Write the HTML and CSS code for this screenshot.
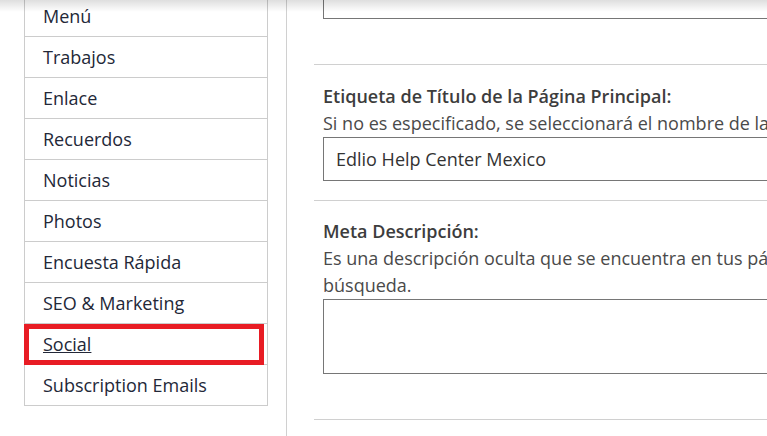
FILE: index.html
```html
<!DOCTYPE html>
<html lang="es">
<head>
<meta charset="utf-8">
<link rel="stylesheet" href="styles.css">
</head>
<body>
<div class="top-shadow"></div>
<div class="page">
  <aside class="sidebar">
    <ul class="nav">
      <li class="nav-item">Menú</li>
      <li class="nav-item">Trabajos</li>
      <li class="nav-item">Enlace</li>
      <li class="nav-item">Recuerdos</li>
      <li class="nav-item">Noticias</li>
      <li class="nav-item">Photos</li>
      <li class="nav-item">Encuesta Rápida</li>
      <li class="nav-item">SEO &amp; Marketing</li>
      <li class="nav-item nav-active"><span class="nav-link">Social</span><span class="highlight"></span></li>
      <li class="nav-item">Subscription Emails</li>
    </ul>
  </aside>
  <main class="content">
    <section class="field field-first">
      <div class="input input-top"></div>
    </section>
    <section class="field">
      <div class="label">Etiqueta de Título de la Página Principal:</div>
      <div class="help">Si no es especificado, se seleccionará el nombre de la escuela por defecto.</div>
      <div class="input">Edlio Help Center Mexico</div>
    </section>
    <section class="field field-last">
      <div class="label">Meta Descripción:</div>
      <div class="help">Es una descripción oculta que se encuentra en tus páginas y que es utilizada por los<br>búsqueda.</div>
      <div class="textarea"></div>
    </section>
  </main>
</div>
</body>
</html>
```
FILE: styles.css
```css
html, body {
  margin: 0;
  padding: 0;
  background: #fff;
  overflow: hidden;
  height: 436px;
}
body {
  font-family: "Open Sans", "Noto Sans", sans-serif;
  font-size: 18px;
  color: #333;
  position: relative;
}
.top-shadow {
  position: absolute;
  left: 0;
  right: 0;
  top: 0;
  height: 12px;
  background: linear-gradient(to bottom, rgba(0,0,0,0.13), rgba(0,0,0,0));
  z-index: 5;
}
.page {
  display: flex;
  margin-top: -4px;
  min-height: 460px;
}
.sidebar {
  width: 262px;
  padding-left: 24px;
  border-right: 1px solid #d0d0d0;
  flex: none;
}
.nav {
  list-style: none;
  margin: 0;
  padding: 0;
  width: 242px;
  border: 1px solid #cccccc;
  border-top: none;
}
.nav-item {
  position: relative;
  height: 40px;
  line-height: 40px;
  padding-left: 18px;
  border-bottom: 1px solid #cccccc;
  color: #232838;
  white-space: nowrap;
}
.nav-item:last-child {
  border-bottom: none;
}
.nav-link {
  text-decoration: underline;
}
.highlight {
  position: absolute;
  left: -1px;
  top: 0;
  width: 230px;
  height: 31px;
  border: 5px solid #e81c24;
}
.content {
  flex: none;
  width: 800px;
  padding-left: 27px;
  margin-top: -1px;
}
.field {
  border-bottom: 1px solid #d0d0d0;
  padding: 18px 0 19px 9px;
}
.field-first {
  padding-top: 0;
  padding-bottom: 45px;
  margin-top: -20px;
}
.field-last {
  padding-top: 17px;
  padding-bottom: 45px;
}
.label {
  font-weight: 600;
  color: #3d3d3d;
  line-height: 27px;
  white-space: nowrap;
}
.help {
  color: #4a4a4a;
  line-height: 27px;
  white-space: nowrap;
}
.input {
  height: 42px;
  line-height: 42px;
  border: 1px solid #767676;
  padding-left: 12px;
  color: #333;
}
.textarea {
  height: 73px;
  border: 1px solid #767676;
}
```
